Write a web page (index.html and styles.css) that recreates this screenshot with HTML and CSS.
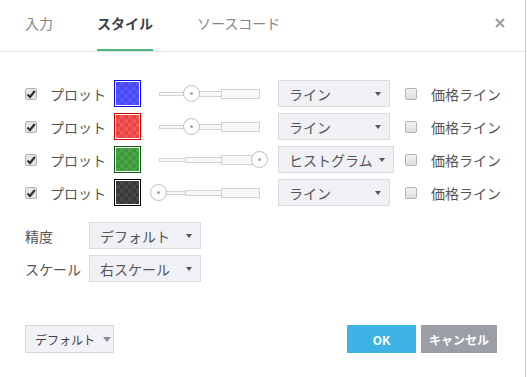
FILE: index.html
```html
<!DOCTYPE html>
<html lang="ja">
<head>
  <meta charset="UTF-8" />
  <title>スタイル</title>
  <link rel="stylesheet" href="styles.css">
</head>
<body>
  <div class="dialog">
    <div class="tabs">
      <div class="tab">入力</div>
      <div class="tab active">スタイル</div>
      <div class="tab">ソースコード</div>
      <span class="close">
        <svg width="10" height="10" viewBox="0 0 10 10"><path d="M1 1L9 9M9 1L1 9" stroke="#9a9ca3" stroke-width="2"/></svg>
      </span>
    </div>

    <div class="plots">
      <span class="check on"></span>
      <span class="plot-name">プロット</span>
      <span class="swatch blue"><i></i></span>
      <div class="slider"><span class="track"><i class="t1"></i><i class="t2"></i><i class="t3"></i></span><span class="knob" style="left: 42px"></span></div>
      <div class="select"><span class="value">ライン</span><span class="caret"></span></div>
      <span class="check"></span>
      <span class="price">価格ライン</span>

      <span class="check on"></span>
      <span class="plot-name">プロット</span>
      <span class="swatch red"><i></i></span>
      <div class="slider"><span class="track"><i class="t1"></i><i class="t2"></i><i class="t3"></i></span><span class="knob" style="left: 42px"></span></div>
      <div class="select"><span class="value">ライン</span><span class="caret"></span></div>
      <span class="check"></span>
      <span class="price">価格ライン</span>

      <span class="check on"></span>
      <span class="plot-name">プロット</span>
      <span class="swatch green"><i></i></span>
      <div class="slider"><span class="track"><i class="t1"></i><i class="t2"></i><i class="t3"></i></span><span class="knob" style="left: 110px"></span></div>
      <div class="select"><span class="value">ヒストグラム</span><span class="caret"></span></div>
      <span class="check"></span>
      <span class="price">価格ライン</span>

      <span class="check on"></span>
      <span class="plot-name">プロット</span>
      <span class="swatch black"><i></i></span>
      <div class="slider"><span class="track"><i class="t1"></i><i class="t2"></i><i class="t3"></i></span><span class="knob" style="left: 9px"></span></div>
      <div class="select"><span class="value">ライン</span><span class="caret"></span></div>
      <span class="check"></span>
      <span class="price">価格ライン</span>
    </div>

    <div class="options">
      <span class="opt-label">精度</span>
      <div class="select"><span class="value">デフォルト</span><span class="caret"></span></div>
      <span class="opt-label">スケール</span>
      <div class="select"><span class="value">右スケール</span><span class="caret"></span></div>
    </div>

    <div class="footer">
      <div class="btn-default">デフォルト<span class="caret grey"></span></div>
      <div class="btn ok">OK</div>
      <div class="btn cancel">キャンセル</div>
    </div>
  </div>
</body>
</html>
```

FILE: styles.css
```css
body {
  margin: 0;
  padding: 0;
  font-family: "Noto Sans CJK JP", "Noto Sans", sans-serif;
  font-size: 14px;
  color: #555;
  background: #fff;
}
.dialog {
  width: 525px;
  height: 377px;
  border-right: 1px solid #c9c9c9;
}
.tabs {
  display: flex;
  height: 51px;
  padding-left: 25px;
  border-bottom: 1px solid #e1e1e1;
}
.tab {
  margin-right: 44px;
  padding-top: 13px;
  line-height: 20px;
  color: #858585;
  box-sizing: border-box;
  height: 51px;
}
.tab.active {
  color: #3a3f47;
  font-weight: bold;
  box-shadow: inset 0 -2px 0 #4fb482;
}
.close {
  display: flex;
  margin-left: auto;
  margin-right: 20px;
  padding-top: 18px;
}
.plots {
  display: grid;
  grid-template-columns: 25px 64px 36px 128px 127px 26px auto;
  grid-auto-rows: 27px;
  row-gap: 6px;
  align-items: center;
  padding: 28px 0 0 25px;
}
.check {
  width: 10px;
  height: 10px;
  border: 1px solid #b4b4b4;
  border-radius: 2px;
  background: linear-gradient(#f2f2f2, #dedede);
}
.check.on {
  background: #e6e6e6 url("data:image/svg+xml;utf8,<svg xmlns='http://www.w3.org/2000/svg' width='10' height='10'><path d='M1.5 5.5L4 8L8.8 2' fill='none' stroke='%23333' stroke-width='2.2'/></svg>") center no-repeat;
}
.plot-name, .price {
  line-height: 20px;
}
.swatch {
  width: 25px;
  height: 25px;
  border: 1px solid;
  display: block;
}
.swatch i {
  display: block;
  margin: 1px;
  width: 23px;
  height: 23px;
  background-size: 8px 8px;
  background-position: 0 0, 4px 4px;
}
.swatch.blue { border-color: #0a0ae0; }
.swatch.blue i {
  background-color: #4848f4;
  background-image: linear-gradient(45deg, #5656ff 25%, transparent 25%, transparent 75%, #5656ff 75%), linear-gradient(45deg, #5656ff 25%, transparent 25%, transparent 75%, #5656ff 75%);
}
.swatch.red { border-color: #d00000; }
.swatch.red i {
  background-color: #e84444;
  background-image: linear-gradient(45deg, #f25656 25%, transparent 25%, transparent 75%, #f25656 75%), linear-gradient(45deg, #f25656 25%, transparent 25%, transparent 75%, #f25656 75%);
}
.swatch.green { border-color: #0b5a0b; }
.swatch.green i {
  background-color: #3b983b;
  background-image: linear-gradient(45deg, #4aa44a 25%, transparent 25%, transparent 75%, #4aa44a 75%), linear-gradient(45deg, #4aa44a 25%, transparent 25%, transparent 75%, #4aa44a 75%);
}
.swatch.black { border-color: #000; }
.swatch.black i {
  background-color: #383838;
  background-image: linear-gradient(45deg, #464646 25%, transparent 25%, transparent 75%, #464646 75%), linear-gradient(45deg, #464646 25%, transparent 25%, transparent 75%, #464646 75%);
}
.slider {
  position: relative;
  width: 120px;
  height: 27px;
}
.track {
  display: flex;
  align-items: center;
  height: 27px;
  margin-left: 9px;
  width: 101px;
}
.track i {
  display: block;
  border: 1px solid #d2d2d2;
  background: #f8f8f8;
  box-sizing: border-box;
}
.track .t1 { width: 27px; height: 4px; }
.track .t2 { width: 37px; height: 6px; margin-left: -1px; }
.track .t3 { width: 39px; height: 10px; margin-left: -1px; }
.knob {
  position: absolute;
  top: 5px;
  width: 17px;
  height: 17px;
  margin-left: -9px;
  border: 1px solid #b9bdc5;
  border-radius: 50%;
  background: #fff;
  box-sizing: border-box;
}
.knob::after {
  content: "";
  position: absolute;
  left: 6px;
  top: 6px;
  width: 3px;
  height: 3px;
  border-radius: 50%;
  background: #a0a4ab;
}
.select {
  display: inline-flex;
  align-items: center;
  box-sizing: border-box;
  min-width: 112px;
  height: 27px;
  padding: 0 8px 0 10px;
  background: #f0f1f5;
  border: 1px solid #dadce1;
  line-height: 20px;
  justify-self: start;
}
.select .value {
  margin-right: 6px;
}
.caret {
  margin-left: auto;
  width: 0;
  height: 0;
  border-left: 3.5px solid transparent;
  border-right: 3.5px solid transparent;
  border-top: 4px solid #555;
}
.caret.grey {
  margin-left: 8px;
  border-left-width: 4px;
  border-right-width: 4px;
  border-top: 5px solid #8e8e8e;
}
.options {
  display: grid;
  grid-template-columns: 64px auto;
  grid-auto-rows: 27px;
  row-gap: 6px;
  align-items: center;
  padding: 16px 0 0 25px;
}
.opt-label {
  line-height: 20px;
}
.footer {
  display: flex;
  align-items: center;
  margin-top: 43px;
  padding: 0 28px 0 25px;
}
.btn-default {
  display: flex;
  align-items: center;
  box-sizing: border-box;
  width: 89px;
  height: 28px;
  padding-left: 9px;
  background: #f1f2f6;
  border: 1px solid #d5d7dc;
  font-size: 12px;
  color: #444;
}
.btn {
  display: flex;
  align-items: center;
  justify-content: center;
  height: 28px;
  color: #fff;
  font-weight: bold;
  font-size: 12px;
}
.ok {
  margin-left: auto;
  width: 69px;
  background: #3cb3e4;
}
.cancel {
  margin-left: 5px;
  width: 76px;
  background: #9c9ea5;
}
```
